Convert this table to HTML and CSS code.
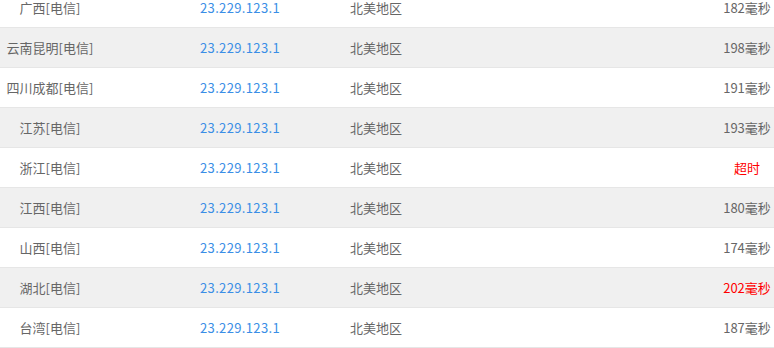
FILE: index.html
```
<!DOCTYPE html>
<html lang="zh-CN">
<head>
<meta charset="utf-8">
<link rel="stylesheet" href="styles.css">
</head>
<body>
<div class="table">
  <div class="row"><span class="c1">广西[电信]</span><span class="c2">23.229.123.1</span><span class="c3">北美地区</span><span class="c4">182毫秒</span></div>
  <div class="row"><span class="c1">云南昆明[电信]</span><span class="c2">23.229.123.1</span><span class="c3">北美地区</span><span class="c4">198毫秒</span></div>
  <div class="row"><span class="c1">四川成都[电信]</span><span class="c2">23.229.123.1</span><span class="c3">北美地区</span><span class="c4">191毫秒</span></div>
  <div class="row"><span class="c1">江苏[电信]</span><span class="c2">23.229.123.1</span><span class="c3">北美地区</span><span class="c4">193毫秒</span></div>
  <div class="row"><span class="c1">浙江[电信]</span><span class="c2">23.229.123.1</span><span class="c3">北美地区</span><span class="c4 red">超时</span></div>
  <div class="row"><span class="c1">江西[电信]</span><span class="c2">23.229.123.1</span><span class="c3">北美地区</span><span class="c4">180毫秒</span></div>
  <div class="row"><span class="c1">山西[电信]</span><span class="c2">23.229.123.1</span><span class="c3">北美地区</span><span class="c4">174毫秒</span></div>
  <div class="row"><span class="c1">湖北[电信]</span><span class="c2">23.229.123.1</span><span class="c3">北美地区</span><span class="c4 red">202毫秒</span></div>
  <div class="row"><span class="c1">台湾[电信]</span><span class="c2">23.229.123.1</span><span class="c3">北美地区</span><span class="c4">187毫秒</span></div>
</div>
</body>
</html>
```
FILE: styles.css
```
html, body {
  margin: 0;
  padding: 0;
  background: #fff;
  overflow: hidden;
}
body {
  font-family: "Noto Sans CJK SC", "Noto Sans", sans-serif;
  font-size: 13px;
  color: #666;
}
.table {
  margin-top: -12px;
}
.row {
  display: grid;
  grid-template-columns: 100px 250px 1fr 54px;
  height: 39px;
  align-items: center;
  border-bottom: 1px solid #e6e6e6;
  white-space: nowrap;
}
.row:nth-child(even) {
  background: #f0f0f0;
}
.c1 {
  text-align: center;
}
.c2 {
  padding-left: 100px;
  color: #3a8ee6;
  letter-spacing: 0.35px;
}
.c4 {
  text-align: center;
}
.red {
  color: #f00;
}
```
